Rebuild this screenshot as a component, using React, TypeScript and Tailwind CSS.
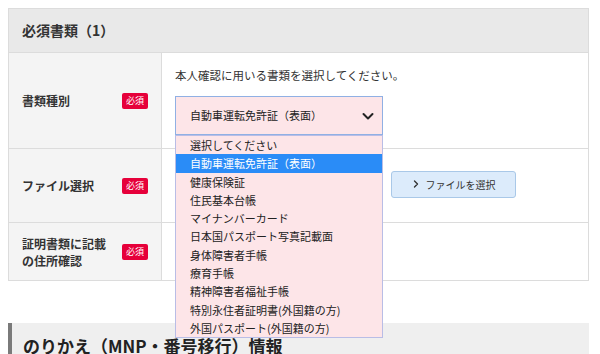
import React from 'react';

const font = { fontFamily: '"Noto Sans CJK JP", "Noto Sans", sans-serif' };

const options = [
  '選択してください',
  '自動車運転免許証（表面）',
  '健康保険証',
  '住民基本台帳',
  'マイナンバーカード',
  '日本国パスポート写真記載面',
  '身体障害者手帳',
  '療育手帳',
  '精神障害者福祉手帳',
  '特別永住者証明書(外国籍の方)',
  '外国パスポート(外国籍の方)',
];

const Badge = () => (
  <span className="inline-flex h-[16px] w-[26px] items-center justify-center rounded-[2px] bg-[#e6003a] text-[9px] leading-none text-white">
    必須
  </span>
);

const Label = ({ children }: { children: React.ReactNode }) => (
  <div className="flex w-[153px] shrink-0 items-center justify-between border-r border-[#dcdcdc] bg-[#f4f4f4] pl-[13px] pr-[13px]">
    <div className="text-[12px] font-bold leading-[17px] text-[#333]">{children}</div>
    <Badge />
  </div>
);

export default function App() {
  return (
    <div className="h-[354px] w-[600px] overflow-hidden bg-white pt-[8px]" style={font}>
      <div className="ml-[8px] w-[581px] border border-[#dcdcdc]">
        <div className="flex h-[44px] items-center border-b border-[#dcdcdc] bg-[#e9e9e9] pl-[13px] text-[14px] font-bold text-[#333]">
          必須書類（1）
        </div>

        <div className="flex h-[96px] border-b border-[#dcdcdc]">
          <Label>書類種別</Label>
          <div className="flex-1 pl-[13px] pt-[14px]">
            <p className="text-[11.5px] leading-[16px] text-[#333]">本人確認に用いる書類を選択してください。</p>
            <div className="relative mt-[13px] w-[208px]">
              <div className="flex h-[39px] items-center justify-between border border-[#90b0e4] bg-[#fde5e8] pl-[14px] pr-[8px] text-[11px] text-[#222]">
                <span>自動車運転免許証（表面）</span>
                <svg width="12" height="12" viewBox="0 0 12 12" fill="none">
                  <path d="M1.5 4 6 8.5 10.5 4" stroke="#222" strokeWidth="2" strokeLinecap="round" strokeLinejoin="round" />
                </svg>
              </div>
              <ul className="absolute left-0 top-full z-10 w-[208px] border border-[#b9bde6] bg-[#fde5e8]">
                {options.map((o, i) => (
                  <li
                    key={o}
                    className={
                      i === 1
                        ? 'h-[18.3px] bg-[#2a8cf7] pl-[14px] text-[11px] leading-[18.3px] text-white'
                        : 'h-[18.3px] pl-[14px] text-[11px] leading-[18.3px] text-[#222]'
                    }
                  >
                    {o}
                  </li>
                ))}
              </ul>
            </div>
          </div>
        </div>

        <div className="flex h-[74px] border-b border-[#dcdcdc]">
          <Label>ファイル選択</Label>
          <div className="flex flex-1 items-center pl-[229px] pb-[3px]">
            <button className="flex h-[27px] w-[125px] items-center justify-center gap-[6px] rounded-[3px] border border-[#a9c8e8] bg-[#dcebfb] text-[10px] text-[#333]">
              <svg width="8" height="8" viewBox="0 0 8 8" fill="none">
                <path d="M2.5 1 5.5 4 2.5 7" stroke="#333" strokeWidth="1.4" strokeLinecap="round" strokeLinejoin="round" />
              </svg>
              ファイルを選択
            </button>
          </div>
        </div>

        <div className="flex h-[57px]">
          <Label>
            証明書類に記載
            <br />
            の住所確認
          </Label>
          <div className="flex-1" />
        </div>
      </div>

      <div className="ml-[8px] mt-[42px] flex h-[40px] w-[581px] items-start border-l-[4px] border-[#7a7a7a] bg-[#efefef] pl-[11px] pt-[10px] text-[17px] font-bold text-[#222]">
        のりかえ（MNP・番号移行）情報
      </div>
    </div>
  );
}
